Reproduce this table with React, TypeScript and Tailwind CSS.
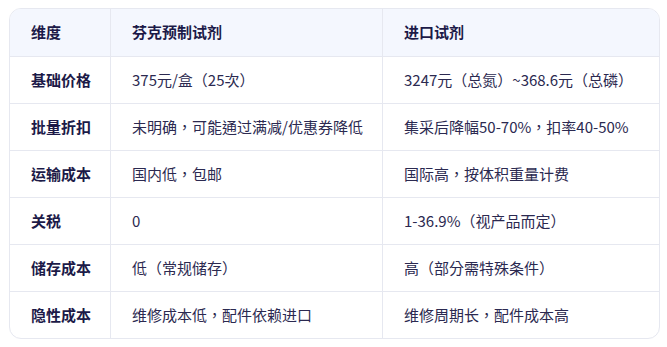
import React from "react";

const rows: [string, string, string][] = [
  ["基础价格", "375元/盒（25次）", "3247元（总氮）~368.6元（总磷）"],
  ["批量折扣", "未明确，可能通过满减/优惠券降低", "集采后降幅50-70%，扣率40-50%"],
  ["运输成本", "国内低，包邮", "国际高，按体积重量计费"],
  ["关税", "0", "1-36.9%（视产品而定）"],
  ["储存成本", "低（常规储存）", "高（部分需特殊条件）"],
  ["隐性成本", "维修成本低，配件依赖进口", "维修周期长，配件成本高"],
];

export default function App() {
  return (
    <div
      className="w-[667px] h-[347px] bg-white pt-[8px] pl-[9px]"
      style={{ fontFamily: '"Noto Sans CJK TC", "Noto Sans CJK SC", sans-serif' }}
    >
      <div className="w-[651px] border border-[#e6e8f0] rounded-[12px] overflow-hidden text-[15px]">
        <div className="grid grid-cols-[100px_272px_1fr] h-[47px] bg-[#f4f7fe] font-bold text-[#1c1a48]">
          <div className="flex items-center pl-[21px]">维度</div>
          <div className="flex items-center pl-[21px] border-l border-[#e6e8f0]">芬克预制试剂</div>
          <div className="flex items-center pl-[21px] border-l border-[#e6e8f0]">进口试剂</div>
        </div>
        {rows.map((r) => (
          <div
            key={r[0]}
            className="grid grid-cols-[100px_272px_1fr] h-[47px] border-t border-[#e6e8f0] text-[#2b2950]"
          >
            <div className="flex items-center pl-[21px] font-bold text-[#1c1a48]">{r[0]}</div>
            <div className="flex items-center pl-[21px] border-l border-[#e6e8f0]">{r[1]}</div>
            <div className="flex items-center pl-[21px] border-l border-[#e6e8f0]">{r[2]}</div>
          </div>
        ))}
      </div>
    </div>
  );
}
